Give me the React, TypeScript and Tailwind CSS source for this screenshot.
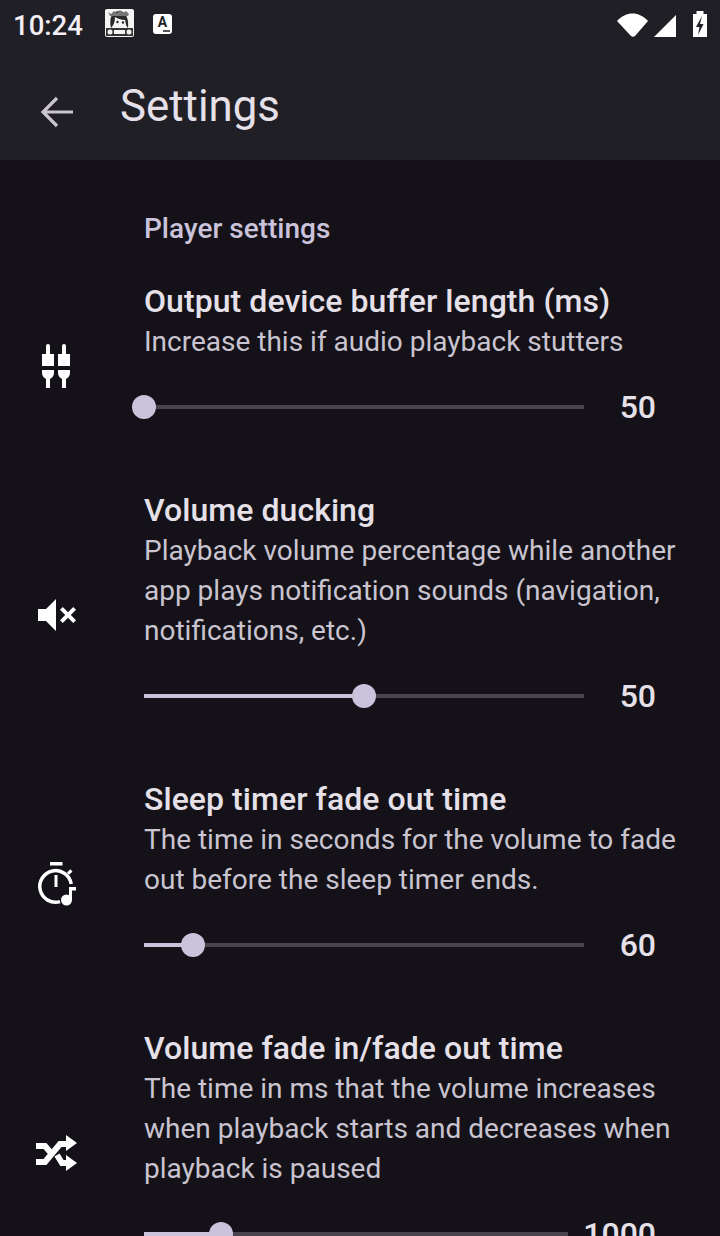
const font = { fontFamily: 'Roboto, sans-serif' };

function Slider({ pct, value, end = 584 }: { pct: number; value: string; end?: number }) {
  return (
    <div className="flex h-[89px] items-start">
      <div className="relative mt-[43px] h-1 shrink-0 bg-[#49454f]" style={{ width: end - 144 }}>
        <div className="absolute left-0 top-0 h-1 bg-[#cbc2db]" style={{ width: `${pct}%` }} />
        <div
          className="absolute top-[-10px] ml-[-12px] h-6 w-6 rounded-full bg-[#cbc2db]"
          style={{ left: `${pct}%` }}
        />
      </div>
      <div className="mt-[25px] flex-1 pr-[64px] text-right text-[32px] font-medium leading-[40px] text-[#e6e0e9]">
        {value}
      </div>
    </div>
  );
}

function Row({ icon, title, summary, pct, value, end }: { icon: React.ReactNode; title: string; summary: string[]; pct: number; value: string; end?: number }) {
  return (
    <div className="flex items-center">
      <div className="flex w-[144px] shrink-0 justify-start pl-8">{icon}</div>
      <div className="min-w-0 flex-1">
        <div className="whitespace-nowrap text-[32px] font-medium leading-[41px] tracking-[0.06px] text-[#e6e0e9]">{title}</div>
        {summary.map((s) => (
          <div key={s} className="whitespace-nowrap text-[28px] leading-[40px] text-[#cac4d0]">{s}</div>
        ))}
        <Slider pct={pct} value={value} end={end} />
      </div>
    </div>
  );
}

function PlugIcon() {
  return (
    <svg width="48" height="48" viewBox="32 342 48 48" fill="#fff">
      <path d="M46 346a2 2 0 0 1 4 0v8h4v12H42v-12h4zM62 346a2 2 0 0 1 4 0v8h4v12H58v-12h4z" />
      <path d="M42 370h12v3c0 3-2 5-4 6v9h-4v-9c-2-1-4-3-4-6zM58 370h12v3c0 3-2 5-4 6v9h-4v-9c-2-1-4-3-4-6z" />
    </svg>
  );
}

function MuteIcon() {
  return (
    <svg width="48" height="48" viewBox="0 0 24 24" fill="#fff">
      <path d="M3 9v6h4l5 5V4L7 9H3z" />
      <path d="M22 9.41 20.59 8 18 10.59 15.41 8 14 9.41 16.59 12 14 14.59 15.41 16 18 13.41 20.59 16 22 14.59 19.41 12z" />
    </svg>
  );
}

function TimerIcon() {
  return (
    <svg width="48" height="48" viewBox="32 860 48 48">
      <rect x="50" y="862" width="12.500" height="3.500" fill="#fff" />
      <rect x="54.500" y="875" width="3" height="12" fill="#fff" />
      <path d="M60 901.600A15.800 15.800 0 1 1 71.200 884" fill="none" stroke="#fff" strokeWidth="3.500" />
      <path d="M68 873.500l3.500-3" stroke="#fff" strokeWidth="3" />
      <circle cx="66.500" cy="900" r="5.500" fill="#fff" />
      <path d="M69 900v-13h7v3.500h-4V900z" fill="#fff" />
    </svg>
  );
}

function ShuffleIcon() {
  return (
    <svg width="48" height="48" viewBox="32 1128 48 48" fill="#fff">
      <path d="M36 1145h9l6 7" fill="none" stroke="#fff" strokeWidth="6" />
      <path d="M36 1161h9l15-18h7" fill="none" stroke="#fff" strokeWidth="6" />
      <path d="M57 1154l5 8h5" fill="none" stroke="#fff" strokeWidth="6" />
      <path d="M66 1134l11 8-11 8zM66 1154l11 8-11 8z" />
    </svg>
  );
}

function StatusBar() {
  return (
    <div className="flex h-12 items-center justify-between pl-[13px] pr-[13px]">
      <div className="flex items-center">
        <span className="mt-[3px] w-[70px] text-[27.5px] font-medium leading-none text-[#f4eff4]">10:24</span>
        <svg width="30" height="30" viewBox="105 8 30 30" className="ml-[22px] -mt-[2px]">
          <rect x="105" y="9" width="29" height="28" rx="2" fill="#f4f4f4" />
          <path d="M111 28c-2-8 0-17 8-17 7 0 10 8 9 17-2-2-3-5-3-8-4 0-8-2-10-3 0 4-1 8-4 11z" fill="#2a2a2a" />
          <path d="M108 12l3 2 3-3 3 2 3-3 3 3 3-2 3 3-1 2h-18z" fill="#777" />
          <path d="M115 18c3 2 7 3 10 2l1 6-6 3-5-4z" fill="#f4f4f4" />
          <circle cx="117.500" cy="22" r="1.200" fill="#222" />
          <circle cx="123" cy="22.500" r="1.200" fill="#222" />
          <rect x="106" y="28" width="27" height="8" fill="#333" />
          <circle cx="110" cy="32" r="2.500" fill="#f4f4f4" />
          <rect x="114" y="30" width="11" height="4" fill="#f4f4f4" />
          <circle cx="129" cy="32" r="2.500" fill="#f4f4f4" />
        </svg>
        <div className="relative ml-[18px] flex h-[20px] w-[19px] items-start justify-center rounded-[3px] bg-white">
          <span className="mt-[1px] text-[14px] font-bold leading-[14px] text-[#211f26]">A</span>
          <div className="absolute bottom-[2px] right-[2px] h-[2px] w-[7px] bg-[#555]" />
        </div>
      </div>
      <svg width="90" height="26" viewBox="617 10 90 26" fill="#fff">
        <path d="M617 20C626 10 639 10 648 20l-13 15c-1 1-3 1-4 0z" />
        <path d="M676 14v22h-22z" />
        <path d="M693 13h3.500v-3h7v3h3.500v23h-14z" />
        <path d="M702 15l-6 11h3.500l-1.500 8 5.500-11H700l2-8z" fill="#211f26" />
      </svg>
    </div>
  );
}

export default function App() {
  return (
    <div className="h-[1236px] w-[720px] overflow-hidden bg-[#141218]" style={font}>
      <div className="h-40 bg-[#211f26]">
        <StatusBar />
        <div className="flex h-[112px] items-start">
          <svg width="48" height="48" viewBox="0 0 48 48" className="ml-8 mt-[39px]" fill="none" stroke="#cac4d0" strokeWidth="3.200">
            <path d="M41 25H12M25 11 11 25l14 14" />
          </svg>
          <div className="ml-10 mt-[36px] text-[43.800px] leading-[44px] text-[#e6e0e9]">Settings</div>
        </div>
      </div>
      <div className="flex flex-col gap-[39px] pt-[49px]">
        <div className="-mb-[7px] h-10 pl-[144px] text-[28px] font-medium leading-[40px] text-[#cbc2db]">Player settings</div>
        <Row icon={<PlugIcon />} title="Output device buffer length (ms)" summary={['Increase this if audio playback stutters']} pct={0} value="50" />
        <Row icon={<MuteIcon />} title="Volume ducking" summary={['Playback volume percentage while another', 'app plays notification sounds (navigation,', 'notifications, etc.)']} pct={50} value="50" />
        <Row icon={<TimerIcon />} title="Sleep timer fade out time" summary={['The time in seconds for the volume to fade', 'out before the sleep timer ends.']} pct={11.2} value="60" />
        <Row icon={<ShuffleIcon />} title="Volume fade in/fade out time" summary={['The time in ms that the volume increases', 'when playback starts and decreases when', 'playback is paused']} pct={18.2} value="1000" end={568} />
      </div>
    </div>
  );
}
